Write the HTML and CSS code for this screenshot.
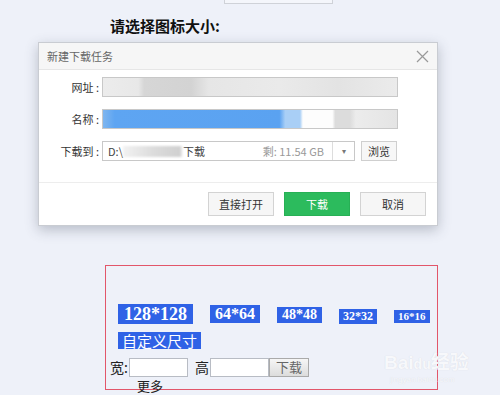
FILE: index.html
```html
<!DOCTYPE html>
<html lang="zh-CN">
<head>
  <meta charset="UTF-8" />
  <meta name="viewport" content="width=device-width, initial-scale=1.0" />
  <title>新建下载任务</title>
  <link rel="stylesheet" href="styles.css">
</head>
<body>
  <div class="page">
    <div class="topbox"></div>
    <h2 class="heading">请选择图标大小:</h2>
    <div class="sizes">
      <div class="tags">
        <span class="tag t128">128*128</span>
        <span class="tag t64">64*64</span>
        <span class="tag t48">48*48</span>
        <span class="tag t32">32*32</span>
        <span class="tag t16">16*16</span>
      </div>
      <div class="tags">
        <span class="tag custom">自定义尺寸</span>
      </div>
      <div class="custom-row">
        <span>宽:</span><input class="num" type="text" />
        <span class="gap">高</span><input class="num" type="text" />
        <button class="dl-btn">下载</button>
      </div>
      <div class="more">更多</div>
    </div>
  </div>

  <div class="watermark">Bai<span class="paw">du</span>经验<div class="wm-sub">jingyan.baidu.com</div></div>

  <div class="dialog">
    <div class="dialog-title">
      <span>新建下载任务</span>
      <svg class="close" width="13" height="13" viewBox="0 0 13 13">
        <path d="M1 1L12 12M12 1L1 12" stroke="#999" stroke-width="1.2" fill="none" />
      </svg>
    </div>
    <div class="dialog-body">
      <div class="row">
        <label>网址 :</label>
        <div class="field blur-url"></div>
      </div>
      <div class="row">
        <label>名称 :</label>
        <div class="field blur-name"></div>
      </div>
      <div class="row">
        <label>下载到 :</label>
        <div class="field path">
          <span class="path-text">D:\<span class="smudge"></span>下载</span>
          <span class="free">剩: 11.54 GB</span>
          <span class="drop">▾</span>
        </div>
        <button class="browse">浏览</button>
      </div>
    </div>
    <div class="dialog-foot">
      <button class="btn">直接打开</button>
      <button class="btn primary">下载</button>
      <button class="btn">取消</button>
    </div>
  </div>
</body>
</html>
```

FILE: styles.css
```css
html {
  overflow: hidden;
}
body {
  margin: 0;
  background: #eef1f9;
  color: #222;
  font-family: "Liberation Serif", "Noto Sans CJK SC", serif;
  width: 500px;
  height: 395px;
  overflow: hidden;
  position: relative;
}
.page {
  display: flex;
  flex-direction: column;
  height: 395px;
  overflow: hidden;
}
.topbox {
  margin-left: 224px;
  width: 107px;
  height: 3px;
  background: #f4f6fb;
  border: 1px solid #cfd2d8;
  border-top: none;
}
.heading {
  margin: 14px 0 0 110px;
  font-family: "Noto Sans CJK SC", sans-serif;
  font-size: 15px;
  line-height: 16px;
  font-weight: bold;
  color: #111;
}
.sizes {
  box-sizing: border-box;
  flex-shrink: 0;
  margin: 231px 0 0 105px;
  width: 333px;
  height: 125px;
  padding: 38px 0 0 12px;
  border: 1px solid #e2566a;
}
.tags {
  display: flex;
  align-items: flex-end;
  gap: 17px;
}
.tag {
  background: #2f62e6;
  color: #fff;
  font-weight: bold;
  padding: 0 5px;
}
.t128 { font-size: 18px; line-height: 20px; padding: 0 6px; }
.t64 { font-size: 16px; line-height: 18px; margin-bottom: 1px; }
.t48 { font-size: 14px; line-height: 16px; margin-bottom: 1px; }
.t32 { font-size: 12px; line-height: 15px; padding: 0 4px; }
.t16 { font-size: 11px; line-height: 13px; margin-bottom: 1px; padding: 0 4px; }
.tags .custom {
  margin-top: 8px;
  font-family: "Noto Sans CJK SC", sans-serif;
  font-weight: normal;
  font-size: 15px;
  line-height: 17px;
  padding: 0 4px;
}
.custom-row {
  display: flex;
  align-items: center;
  margin: 8px 0 0 -8px;
  font-family: "Noto Sans CJK SC", sans-serif;
  font-size: 14px;
  color: #222;
}
.num {
  box-sizing: border-box;
  width: 59px;
  height: 19px;
  margin: 0 0 0 1px;
  border: 1px solid #b8bcc4;
  background: #fff;
  padding: 0;
}
.gap {
  margin-left: 7px;
}
.dl-btn {
  box-sizing: border-box;
  width: 40px;
  height: 19px;
  padding: 0;
  border: 1px solid #aaa;
  background: linear-gradient(#f6f6f6, #dcdcdc);
  font-family: "Noto Sans CJK SC", sans-serif;
  font-size: 13px;
  line-height: 16px;
  color: #666;
}
.more {
  margin: 1px 0 0 19px;
  font-family: "Noto Sans CJK SC", sans-serif;
  font-size: 13px;
  line-height: 16px;
}
.watermark {
  position: absolute;
  left: 384px;
  top: 352px;
  font-family: "Liberation Sans", "Noto Sans CJK SC", sans-serif;
  font-size: 19px;
  font-weight: bold;
  color: #f7f8fb;
  text-shadow: 0 0 1px #d4d7df;
  line-height: 21px;
}
.watermark .paw {
  font-size: 14px;
}
.watermark .wm-sub {
  font-size: 8px;
  line-height: 10px;
  font-weight: normal;
  margin-left: 6px;
}
.dialog {
  position: absolute;
  left: 38px;
  top: 42px;
  width: 398px;
  background: #fff;
  border: 1px solid #c9ccd2;
  box-shadow: 0 4px 12px rgba(60, 70, 90, 0.3);
  font-family: "Noto Sans CJK SC", sans-serif;
}
.dialog-title {
  display: flex;
  align-items: center;
  justify-content: space-between;
  height: 26px;
  padding: 0 8px 0 8px;
  background: #f6f6f6;
  border-bottom: 1px solid #e6e6e6;
  font-size: 11px;
  color: #666;
}
.dialog-body {
  display: flex;
  flex-direction: column;
  gap: 12px;
  padding: 7px 0 21px 0;
  border-bottom: 1px solid #ededed;
}
.row {
  display: flex;
  align-items: center;
  height: 20px;
}
.row label {
  width: 60px;
  padding-right: 3px;
  text-align: right;
  font-size: 11px;
  color: #333;
}
.field {
  box-sizing: border-box;
  height: 20px;
  width: 296px;
  border: 1px solid #c8c8c8;
  background: #fff;
}
.blur-url {
  background: linear-gradient(90deg, #ececec 0%, #e8e8e8 12%, #d6d6d6 14%, #d3d3d3 30%, #e6e6e6 36%, #eaeaea 60%, #e3e3e3 80%, #ebebeb 100%);
}
.blur-name {
  background: linear-gradient(90deg, #7fb6ef 0%, #5ea5f2 4%, #5aa2f1 60%, #a9cff6 62%, #a9cff6 67%, #fdfdfd 68%, #fdfdfd 78%, #dcdcdc 79%, #dcdcdc 84%, #ececec 86%, #e4e4e4 100%);
}
.path {
  display: flex;
  align-items: center;
  width: 253px;
  font-size: 11px;
  color: #444;
}
.path-text {
  display: flex;
  align-items: center;
  padding-left: 5px;
  flex: 1;
}
.smudge {
  display: inline-block;
  width: 60px;
  height: 11px;
  background: linear-gradient(90deg, #f2f2f2, #dcdcdc 50%, #d0d0d0 95%, #fff);
  filter: blur(1px);
}
.free {
  color: #999;
  font-size: 11px;
  padding-right: 8px;
}
.drop {
  width: 21px;
  height: 18px;
  border-left: 1px solid #ddd;
  text-align: center;
  font-size: 8px;
  line-height: 18px;
  color: #777;
}
.browse {
  box-sizing: border-box;
  height: 20px;
  width: 36px;
  margin-left: 6px;
  padding: 0;
  border: 1px solid #cfcfcf;
  background: #f7f7f7;
  font-family: "Noto Sans CJK SC", sans-serif;
  font-size: 11px;
  color: #333;
}
.dialog-foot {
  display: flex;
  justify-content: flex-end;
  gap: 10px;
  padding: 9px 11px 9px 0;
}
.btn {
  box-sizing: border-box;
  width: 66px;
  height: 24px;
  padding: 0;
  border: 1px solid #d3d3d3;
  background: #f6f6f6;
  font-family: "Noto Sans CJK SC", sans-serif;
  font-size: 11px;
  color: #333;
}
.btn.primary {
  background: #2cbb5d;
  border-color: #27b055;
  color: #fff;
}
```
